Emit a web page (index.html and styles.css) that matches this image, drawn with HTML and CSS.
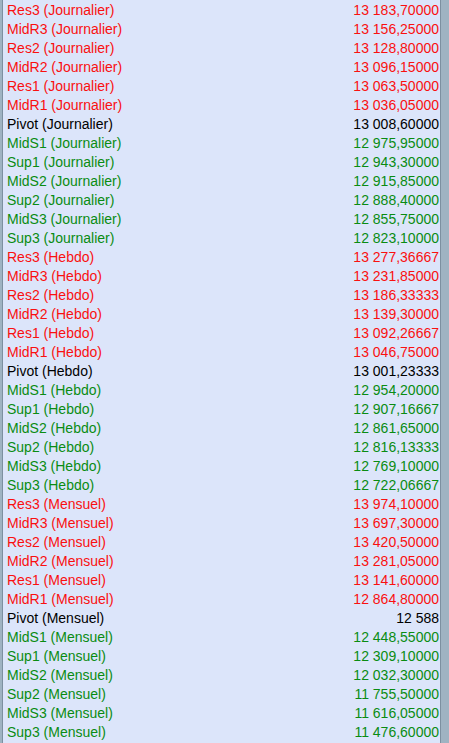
FILE: index.html
```html
<!DOCTYPE html>
<html>
<head>
<meta charset="utf-8">
<link rel="stylesheet" href="styles.css">
</head>
<body>
<div class="frame">
  <div class="list" id="list">
    <div class="row r"><span>Res3 (Journalier)</span><span>13 183,70000</span></div>
    <div class="row r"><span>MidR3 (Journalier)</span><span>13 156,25000</span></div>
    <div class="row r"><span>Res2 (Journalier)</span><span>13 128,80000</span></div>
    <div class="row r"><span>MidR2 (Journalier)</span><span>13 096,15000</span></div>
    <div class="row r"><span>Res1 (Journalier)</span><span>13 063,50000</span></div>
    <div class="row r"><span>MidR1 (Journalier)</span><span>13 036,05000</span></div>
    <div class="row p"><span>Pivot (Journalier)</span><span>13 008,60000</span></div>
    <div class="row g"><span>MidS1 (Journalier)</span><span>12 975,95000</span></div>
    <div class="row g"><span>Sup1 (Journalier)</span><span>12 943,30000</span></div>
    <div class="row g"><span>MidS2 (Journalier)</span><span>12 915,85000</span></div>
    <div class="row g"><span>Sup2 (Journalier)</span><span>12 888,40000</span></div>
    <div class="row g"><span>MidS3 (Journalier)</span><span>12 855,75000</span></div>
    <div class="row g"><span>Sup3 (Journalier)</span><span>12 823,10000</span></div>
    <div class="row r"><span>Res3 (Hebdo)</span><span>13 277,36667</span></div>
    <div class="row r"><span>MidR3 (Hebdo)</span><span>13 231,85000</span></div>
    <div class="row r"><span>Res2 (Hebdo)</span><span>13 186,33333</span></div>
    <div class="row r"><span>MidR2 (Hebdo)</span><span>13 139,30000</span></div>
    <div class="row r"><span>Res1 (Hebdo)</span><span>13 092,26667</span></div>
    <div class="row r"><span>MidR1 (Hebdo)</span><span>13 046,75000</span></div>
    <div class="row p"><span>Pivot (Hebdo)</span><span>13 001,23333</span></div>
    <div class="row g"><span>MidS1 (Hebdo)</span><span>12 954,20000</span></div>
    <div class="row g"><span>Sup1 (Hebdo)</span><span>12 907,16667</span></div>
    <div class="row g"><span>MidS2 (Hebdo)</span><span>12 861,65000</span></div>
    <div class="row g"><span>Sup2 (Hebdo)</span><span>12 816,13333</span></div>
    <div class="row g"><span>MidS3 (Hebdo)</span><span>12 769,10000</span></div>
    <div class="row g"><span>Sup3 (Hebdo)</span><span>12 722,06667</span></div>
    <div class="row r"><span>Res3 (Mensuel)</span><span>13 974,10000</span></div>
    <div class="row r"><span>MidR3 (Mensuel)</span><span>13 697,30000</span></div>
    <div class="row r"><span>Res2 (Mensuel)</span><span>13 420,50000</span></div>
    <div class="row r"><span>MidR2 (Mensuel)</span><span>13 281,05000</span></div>
    <div class="row r"><span>Res1 (Mensuel)</span><span>13 141,60000</span></div>
    <div class="row r"><span>MidR1 (Mensuel)</span><span>12 864,80000</span></div>
    <div class="row p"><span>Pivot (Mensuel)</span><span>12 588</span></div>
    <div class="row g"><span>MidS1 (Mensuel)</span><span>12 448,55000</span></div>
    <div class="row g"><span>Sup1 (Mensuel)</span><span>12 309,10000</span></div>
    <div class="row g"><span>MidS2 (Mensuel)</span><span>12 032,30000</span></div>
    <div class="row g"><span>Sup2 (Mensuel)</span><span>11 755,50000</span></div>
    <div class="row g"><span>MidS3 (Mensuel)</span><span>11 616,05000</span></div>
    <div class="row g"><span>Sup3 (Mensuel)</span><span>11 476,60000</span></div>
  </div>
  <div class="side"></div>
</div>
</body>
</html>
```

FILE: styles.css
```css
html, body {
  margin: 0;
  padding: 0;
  background: #dce5fa;
  height: 100%;
  overflow: hidden;
}
.frame {
  display: flex;
  height: 743px;
  border-left: 2px solid #9fb3c2;
  box-sizing: border-box;
}
.list {
  flex: 1;
  background: #dce5fa;
  border-left: 1px solid #7d90a0;
  border-right: 1px solid #7d90a0;
  font-family: "Liberation Sans", Arial, sans-serif;
  font-size: 14px;
}
.side {
  width: 8px;
  background: #9fb3c2;
}
.row {
  display: flex;
  justify-content: space-between;
  align-items: center;
  height: 19px;
  padding: 0 1px 0 4px;
  white-space: nowrap;
}
.r { color: #fa1010; }
.g { color: #0a8c12; }
.p { color: #000; }
```
